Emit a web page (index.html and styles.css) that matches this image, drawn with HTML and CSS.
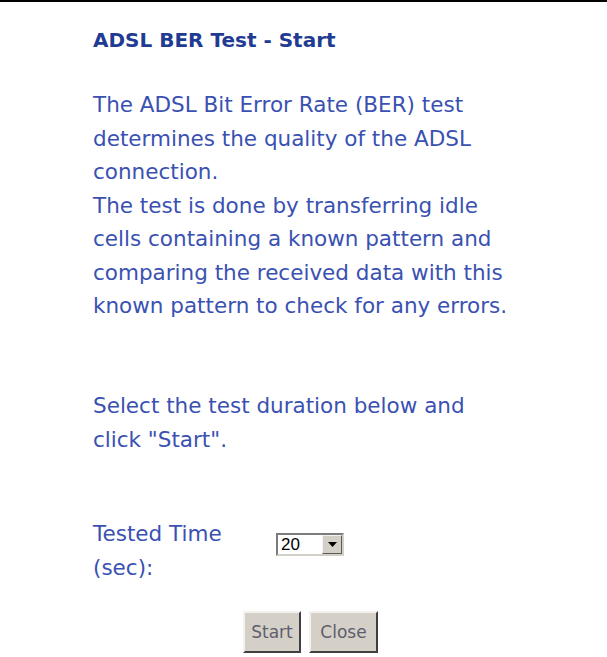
FILE: index.html
```html
<!DOCTYPE html>
<html lang="en">
<head>
    <meta charset="UTF-8">
    <meta name="viewport" content="width=device-width, initial-scale=1.0">
    <title>ADSL BER Test</title>
    <link rel="stylesheet" href="styles.css">
</head>
<body>
    <div class="topline"></div>
    <div class="content">
        <h3 class="title">ADSL BER Test - Start</h3>

        <p class="text">
            The ADSL Bit Error Rate (BER) test determines the quality of the ADSL connection.<br>
            The test is done by transferring idle cells containing a known pattern and comparing the received data with this known pattern to check for any errors.
        </p>

        <p class="text select-note">
            Select the test duration below and click "Start".
        </p>

        <table class="form-table">
            <tr>
                <td class="label">Tested Time (sec):</td>
                <td class="field">
                    <div class="select">
                        <span class="value">20</span>
                        <span class="arrow">
                            <svg width="9" height="5" viewBox="0 0 9 5"><path d="M0 0h9L4.5 5z" fill="#000"/></svg>
                        </span>
                    </div>
                </td>
            </tr>
        </table>
    </div>

    <div class="buttons">
        <button type="button" class="btn btn-start">Start</button>
        <button type="button" class="btn btn-close">Close</button>
    </div>
</body>
</html>
```

FILE: styles.css
```css
body {
    margin: 0;
    background: #ffffff;
    font-family: "DejaVu Sans", Verdana, sans-serif;
    color: #3a51b2;
}
.topline {
    height: 2px;
    background: #000000;
}
.content {
    padding-left: 93px;
    width: 420px;
}
.title {
    margin: 26px 0 0 0;
    font-size: 20px;
    font-weight: bold;
    color: #1f3c92;
    line-height: 24px;
}
.text {
    margin: 36px 0 0 0;
    font-size: 21.5px;
    line-height: 33.5px;
}
.select-note {
    margin-top: 66.5px;
}
.form-table {
    margin-top: 61.25px;
    border-collapse: collapse;
}
.form-table td {
    padding: 0;
    vertical-align: middle;
}
.form-table .label {
    width: 160px;
    padding-right: 23px;
    font-size: 21.5px;
    line-height: 33.5px;
}
.form-table .field {
    padding-bottom: 13px;
}
.select {
    display: flex;
    width: 68px;
    height: 23px;
    box-sizing: border-box;
    border: 2px solid;
    border-color: #7c7c7c #d4d0c8 #d4d0c8 #7c7c7c;
    background: #ffffff;
    font-family: "Liberation Sans", Arial, sans-serif;
    font-size: 17px;
    color: #000000;
}
.select .value {
    flex: 1;
    padding-left: 3px;
    line-height: 19px;
}
.select .arrow {
    width: 20px;
    display: flex;
    align-items: center;
    justify-content: center;
    background: #d4d0c8;
    border: 1px solid;
    border-color: #f4f2ee #5a5a5a #5a5a5a #f4f2ee;
    box-sizing: border-box;
}
.buttons {
    display: flex;
    justify-content: center;
    gap: 8px;
    margin-top: 27px;
    padding-left: 14px;
}
.btn {
    height: 42px;
    padding: 0;
    background: #d4d0c8;
    border: 2px solid;
    border-color: #f4f2ee #404040 #404040 #f4f2ee;
    font-family: "DejaVu Sans", Verdana, sans-serif;
    font-size: 17px;
    color: #5e5e6e;
}
.btn-start {
    width: 58px;
}
.btn-close {
    width: 69px;
}
```
